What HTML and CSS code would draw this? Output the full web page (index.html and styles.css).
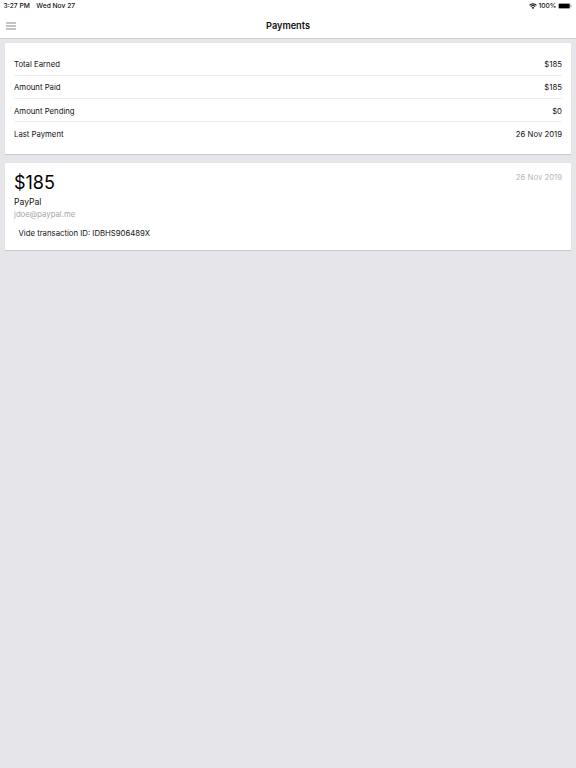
FILE: index.html
```
<!DOCTYPE html>
<html lang="en">
<head>
  <meta charset="UTF-8">
  <meta name="viewport" content="width=device-width, initial-scale=1.0">
  <title>Payments</title>
  <link rel="stylesheet" href="styles.css">
</head>
<body>
  <header class="header">
    <div class="status-bar">
      <div class="status-left">
        <span>3:27 PM</span>
        <span class="day">Wed Nov 27</span>
      </div>
      <div class="status-right">
        <svg class="wifi" viewBox="0 0 16 12" width="8" height="6">
          <path d="M1 4.6a10 10 0 0 1 14 0M3.6 7.2a6.3 6.3 0 0 1 8.8 0" fill="none" stroke="#111" stroke-width="2.2"/>
          <path d="M8 12 5.4 9.4a3.7 3.7 0 0 1 5.2 0z" fill="#111"/>
        </svg>
        <span class="percent">100%</span>
        <svg class="battery" viewBox="0 0 14 6" width="14" height="6">
          <rect x="0.25" y="0.25" width="12" height="5.5" rx="1.5" fill="#fff" stroke="#888" stroke-width="0.5"/>
          <rect x="0.8" y="0.8" width="10.9" height="4.4" rx="0.9" fill="#000"/>
          <path d="M12.9 2v2q.7-.3.7-1t-.7-1z" fill="#777"/>
        </svg>
      </div>
    </div>
    <nav class="nav">
      <svg class="menu" viewBox="0 0 10 8" width="10" height="8">
        <path d="M0 1h10M0 4h10M0 7h10" stroke="#b5afb6" stroke-width="1.3"/>
      </svg>
      <h1>Payments</h1>
    </nav>
  </header>

  <main class="container">
    <section class="card summary">
      <div class="row"><span>Total Earned</span><span>$185</span></div>
      <div class="row"><span>Amount Paid</span><span>$185</span></div>
      <div class="row"><span>Amount Pending</span><span>$0</span></div>
      <div class="row"><span>Last Payment</span><span>26 Nov 2019</span></div>
    </section>

    <section class="card payment">
      <div class="details">
        <div class="amount">$185</div>
        <div class="method">PayPal</div>
        <div class="email">jdoe@paypal.me</div>
        <div class="note">Vide transaction ID: IDBHS906489X</div>
      </div>
      <div class="date">26 Nov 2019</div>
    </section>
  </main>
</body>
</html>
```
FILE: styles.css
```
body {
  margin: 0;
  min-height: 100vh;
  font-family: Inter, "Liberation Sans", sans-serif;
  font-size: 7.75px;
  color: #111;
  background-color: #e5e5ea;
}
.header {
  box-sizing: border-box;
  height: 39px;
  background-color: #fff;
  border-bottom: 1px solid #d0d0d3;
}
.status-bar {
  display: flex;
  justify-content: space-between;
  height: 12px;
  padding: 0 4px 0 3.5px;
  line-height: 12px;
  font-size: 6.7px;
  font-weight: 500;
}
.status-left {
  display: flex;
  gap: 6.5px;
}
.status-right {
  display: flex;
  align-items: center;
  gap: 1.5px;
}
.nav {
  display: grid;
  grid-template-columns: 60px 1fr 60px;
  align-items: center;
  height: 27px;
}
.menu {
  margin-left: 6px;
}
h1 {
  margin: 0;
  text-align: center;
  font-size: 9.2px;
  font-weight: 600;
}
.container {
  padding: 4px 5px;
}
.card {
  box-sizing: border-box;
  background-color: #fff;
  border-radius: 1px;
  box-shadow: 0 1px 1px rgba(0, 0, 0, 0.14);
}
.summary {
  height: 111px;
  padding: 9.4px 9px;
  margin-bottom: 9px;
}
.row {
  display: flex;
  align-items: center;
  justify-content: space-between;
  box-sizing: border-box;
  height: 23.3px;
  padding-top: 1px;
  border-bottom: 1px solid #ededf0;
}
.row:last-child {
  padding-top: 0;
  border-bottom: none;
}
.payment {
  display: flex;
  justify-content: space-between;
  height: 87px;
  padding: 9px;
}
.amount {
  line-height: 22px;
  font-size: 18px;
  color: #000;
}
.method {
  margin-top: 3px;
  line-height: 11px;
  font-size: 8.6px;
}
.email {
  line-height: 12px;
  color: #a5a5a8;
}
.note {
  margin-top: 7px;
  padding-left: 4.5px;
  line-height: 12px;
}
.date {
  line-height: 11px;
  color: #b9b3bd;
}
```
